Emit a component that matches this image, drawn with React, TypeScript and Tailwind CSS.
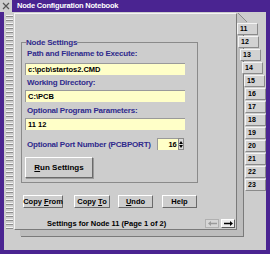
import React from "react"

const tabs = [
  { n: "11", ml: "ml-[0px]" },
  { n: "12", ml: "ml-[1px]" },
  { n: "13", ml: "ml-[3px]" },
  { n: "14", ml: "ml-[5px]" },
  { n: "15", ml: "ml-[7px]" },
  { n: "16", ml: "ml-[8px]" },
  { n: "17", ml: "ml-[8px]" },
  { n: "18", ml: "ml-[8px]" },
  { n: "19", ml: "ml-[8px]" },
  { n: "20", ml: "ml-[8px]" },
  { n: "21", ml: "ml-[8px]" },
  { n: "22", ml: "ml-[8px]" },
  { n: "23", ml: "ml-[8px]" },
]

function Binding() {
  const marks = []
  for (let y = 3; y < 216; y += 4) marks.push(y)
  return (
    <svg width="10" height="238" className="shrink-0">
      {marks.map((y) => (
        <g key={y}>
          <line x1="2" y1={y + 0.5} x2="9" y2={y + 0.5} stroke="#f4f4f4" />
          <line x1="2" y1={y + 1.5} x2="9" y2={y + 1.5} stroke="#8c8c8c" />
        </g>
      ))}
    </svg>
  )
}

function Label({ children }: { children: React.ReactNode }) {
  return (
    <div className="pl-[2px] h-[9px] leading-[9px] text-[8px] font-bold tracking-[-0.2px] text-[#2f2a8c] whitespace-nowrap">
      {children}
    </div>
  )
}

function Field({ value }: { value: string }) {
  return (
    <div className="w-[160px] h-[12px] bg-[#ffffc8] border-t border-l border-[#9a9a9a] pl-[2px] leading-[11px] text-[7.5px] font-bold text-black whitespace-nowrap">
      {value}
    </div>
  )
}

function Btn({ children, w }: { children: React.ReactNode; w: string }) {
  return (
    <div
      className={`${w} h-[13px] flex items-center justify-center bg-[#cdcdcd] border border-t-white border-l-white border-r-[#6a6a6a] border-b-[#6a6a6a] text-[7.5px] font-bold text-black whitespace-nowrap`}
    >
      {children}
    </div>
  )
}

export default function App() {
  return (
    <div className="w-[270px] h-[254px] bg-[#4a2491] flex flex-col font-['Liberation_Sans',Arial,sans-serif] overflow-hidden">
      {/* Title bar */}
      <div className="h-[12px] flex shrink-0">
        <div className="w-[12px] h-[12px] bg-[#cfcfcf] flex items-center justify-center">
          <svg width="8" height="8" viewBox="0 0 8 8">
            <path d="M1 1 L7 7 M7 1 L1 7" stroke="#555" strokeWidth="1.2" />
          </svg>
        </div>
        <div className="flex-1 flex items-center pl-[5px] text-white font-bold text-[7.5px] tracking-[-0.2px] leading-none">
          Node Configuration Notebook
        </div>
      </div>

      {/* Body */}
      <div className="flex-1 flex mx-[4px] mb-[4px] bg-[#cdcdcd]">
        <Binding />
        <div className="flex-1 flex">
          {/* Page */}
          <div className="w-[223px] h-[217px] mt-[1px] shrink-0 bg-[#cdcdcd] border border-t-[#f4f4f4] border-l-[#f4f4f4] border-r-[#7a7a7a] border-b-[#7a7a7a] shadow-[6px_6px_0_0_#bdbdbd,7px_7px_0_0_#7a7a7a] flex flex-col pl-[6px]">
            <fieldset className="mt-[24px] w-[177px] border border-[#8a8a8a] pl-[3px] pr-[3px] pb-[4px]">
              <legend className="ml-[1px] px-0 text-[8px] font-bold tracking-[-0.2px] text-[#2f2a8c] leading-[9px]">
                Node Settings
              </legend>
              <div className="flex flex-col pt-[2px]">
                <Label>Path and Filename to Execute:</Label>
                <div className="mt-[5px]">
                  <Field value="c:\pcb\startos2.CMD" />
                </div>
                <div className="mt-[3px]">
                  <Label>Working Directory:</Label>
                </div>
                <div className="mt-[3px]">
                  <Field value="C:\PCB" />
                </div>
                <div className="mt-[4px]">
                  <Label>Optional Program Parameters:</Label>
                </div>
                <div className="mt-[3px]">
                  <Field value="11 12" />
                </div>
                <div className="mt-[8px] h-[12px] flex items-center">
                  <Label>Optional Port Number (PCBPORT)</Label>
                  <div className="ml-[6px] flex">
                    <div className="w-[21px] h-[12px] bg-[#ffffc8] border-t border-l border-[#9a9a9a] pr-[1px] text-right leading-[11px] text-[7.5px] font-bold text-black">
                      16
                    </div>
                    <div className="w-[6px] h-[12px] bg-[#d8d8d8] border border-[#8a8a8a] flex flex-col items-center justify-center gap-[1px]">
                      <svg width="4" height="3" viewBox="0 0 4 3">
                        <path d="M2 0 L4 3 L0 3 Z" fill="#000" />
                      </svg>
                      <svg width="4" height="3" viewBox="0 0 4 3">
                        <path d="M0 0 L4 0 L2 3 Z" fill="#000" />
                      </svg>
                    </div>
                  </div>
                </div>
                <div className="mt-[7px] w-[68px] h-[21px] flex items-center justify-center bg-[#cdcdcd] border border-t-white border-l-white border-r-[#6a6a6a] border-b-[#6a6a6a] shadow-[1px_1px_0_0_#9a9a9a] text-[8px] font-bold text-black">
                  <span>
                    <span className="underline">R</span>un Settings
                  </span>
                </div>
              </div>
            </fieldset>

            {/* Action buttons */}
            <div className="mt-[12px] flex">
              <div className="ml-[2px]">
                <Btn w="w-[40px]">
                  <span>
                    Copy <span className="underline">F</span>rom
                  </span>
                </Btn>
              </div>
              <div className="ml-[11px]">
                <Btn w="w-[36px]">
                  <span>
                    Copy <span className="underline">T</span>o
                  </span>
                </Btn>
              </div>
              <div className="ml-[8px]">
                <Btn w="w-[35px]">
                  <span>
                    <span className="underline">U</span>ndo
                  </span>
                </Btn>
              </div>
              <div className="ml-[9px]">
                <Btn w="w-[35px]">Help</Btn>
              </div>
            </div>

            {/* Status line */}
            <div className="mt-[11px] h-[9px] flex items-center">
              <div className="ml-[26px] text-[7.5px] font-bold text-black whitespace-nowrap leading-none">
                Settings for Node 11 (Page 1 of 2)
              </div>
              <div className="ml-auto mr-[1px] flex gap-[2px]">
                <div className="w-[14px] h-[9px] bg-[#d6d6d6] border border-[#b0b0b0] flex items-center justify-center">
                  <svg width="9" height="5" viewBox="0 0 9 5">
                    <path d="M0 2.5 L3 0 L3 1.8 L9 1.8 L9 3.2 L3 3.2 L3 5 Z" fill="#9a9a9a" />
                  </svg>
                </div>
                <div className="w-[14px] h-[9px] bg-[#ececec] border border-t-white border-l-white border-r-[#5a5a5a] border-b-[#5a5a5a] flex items-center justify-center">
                  <svg width="9" height="5" viewBox="0 0 9 5">
                    <path d="M9 2.5 L6 0 L6 1.8 L0 1.8 L0 3.2 L6 3.2 L6 5 Z" fill="#000" />
                  </svg>
                </div>
              </div>
            </div>
          </div>

          {/* Tabs */}
          <div className="flex-1 flex flex-col">
            <svg width="11" height="10" viewBox="0 0 11 10" className="mt-[1px]">
              <path d="M0 0 L1 0 L10 9 L10 10 L0 10 Z" fill="#c4c4c4" />
              <path d="M1 0 L10 9" stroke="#8a8a8a" />
            </svg>
            <div className="flex flex-col gap-[1px]">
              {tabs.map((t) => (
                <div
                  key={t.n}
                  className={`${t.ml} w-[21px] h-[12px] bg-[#d2d2d2] border border-t-[#f4f4f4] border-l-[#f4f4f4] border-r-[#8a8a8a] border-b-[#8a8a8a] pl-[2px] leading-[10px] text-[7px] font-bold text-black`}
                >
                  {t.n}
                </div>
              ))}
            </div>
          </div>
        </div>
      </div>
    </div>
  )
}
